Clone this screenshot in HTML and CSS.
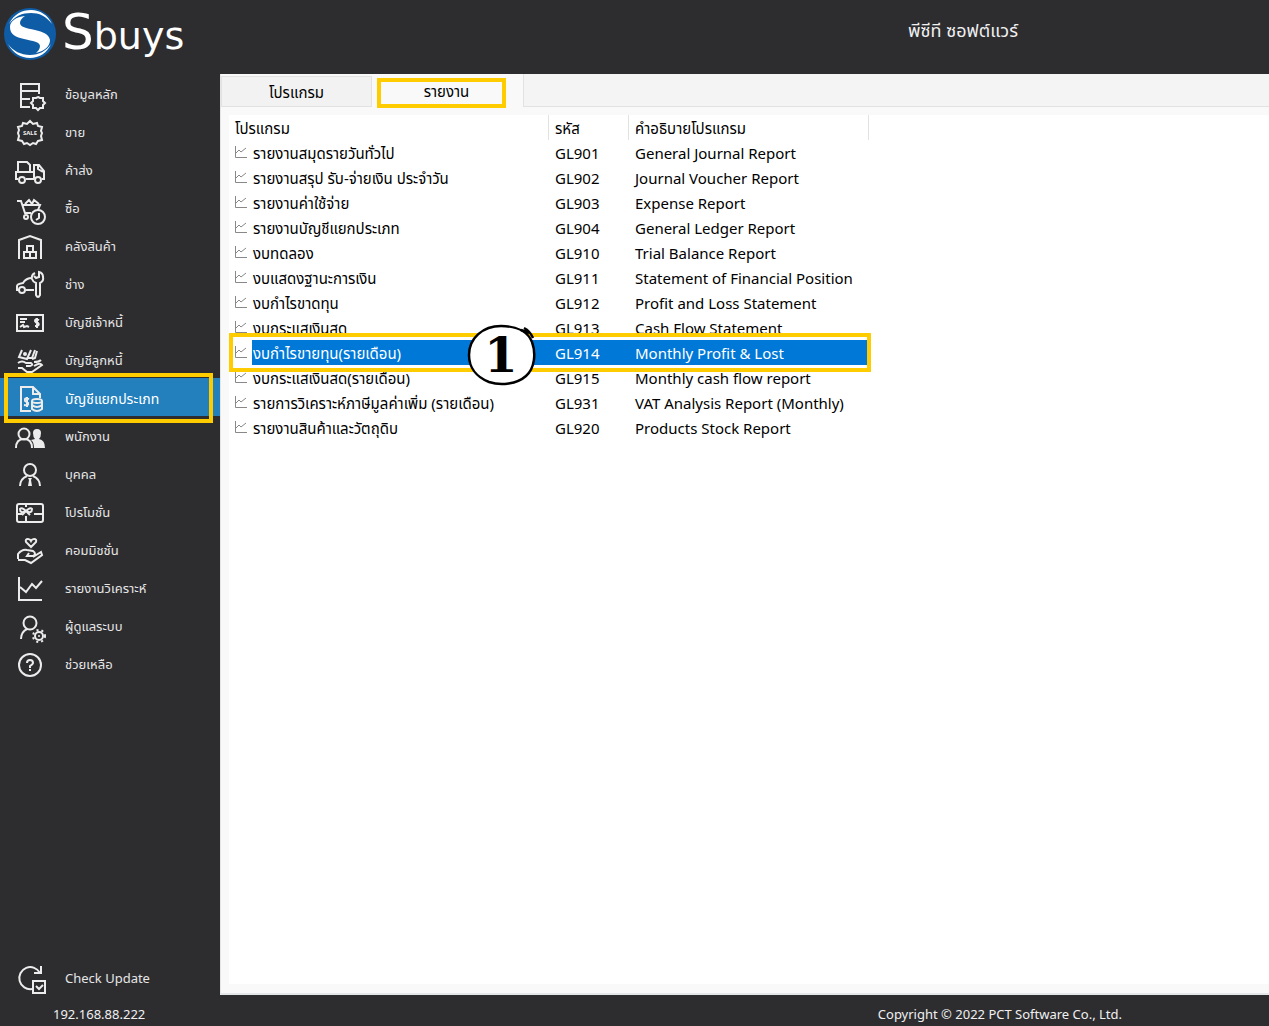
FILE: index.html
```
<!DOCTYPE html>
<html lang="th">
<head>
  <meta charset="utf-8">
  <title>Sbuys</title>
  <link rel="stylesheet" href="styles.css">
</head>
<body>
  <header class="topbar">
    <div class="logo">
      <svg class="logo-mark" viewBox="0 0 52 52">
        <circle cx="26" cy="26" r="26" fill="#0f5ca6"/>
        <path d="M5 16C10 6 18 2 27 2C36 2 44 7 48 16C42 8 35 5 27 5C18 5 11 8 5 16Z" fill="#fff"/>
        <path d="M4 36C9 45 17 50 26 50C35 50 43 45 47 36C42 43 35 47 26 47C17 47 9 43 4 36Z" fill="#fff"/>
        <path d="M21 8C12 9 6 13 6 19C6 27 12 29 20 31C29 33 36 34 36 38C36 41 34 43 32 45C41 43 46 38 46 32C45 26 39 24 31 22C22 20 16 19 16 15C16 12 18 10 21 8Z" fill="#fff"/>
      </svg>
      <span class="logo-text"><span class="logo-big">S</span>buys</span>
    </div>
    <div class="company">พีซีที ซอฟต์แวร์</div>
  </header>

  <div class="middle">
    <aside class="sidebar">
      <nav class="menu">
        <a class="item" href="#">
          <svg class="icon" viewBox="0 0 32 32"><path d="M25 15V5H7V28H16M7 12H25M7 20H16"/><path d="M24 18L26 19L29 19L29 22L31 24L29 26L29 29L26 29L24 31L22 29L19 29L19 26L17 24L19 22L19 19L22 19Z"/></svg>
          ข้อมูลหลัก</a>
        <a class="item" href="#">
          <svg class="icon" viewBox="0 0 32 32"><path d="M16 4L19 7L23 6L24 9L28 10L27 14L28 16L27 19L28 23L24 24L22 27L19 26L16 28L13 26L10 27L8 24L4 23L5 19L4 16L5 13L4 10L8 9L9 6L13 7Z"/><text class="sale" x="16" y="18">SALE</text></svg>
          ขาย</a>
        <a class="item" href="#">
          <svg class="icon" viewBox="0 0 32 32"><path d="M4 17V7H13L16 10V17M20 24V10H25L30 16V24H28M20 17H2V24H4M12 24H20M24 10V14L29 17"/><circle cx="8" cy="25" r="3"/><circle cx="24" cy="25" r="3"/></svg>
          ค้าส่ง</a>
        <a class="item" href="#">
          <svg class="icon" viewBox="0 0 32 32"><path d="M3 8H7L11 20H17M8 12H26L24 17M11 11L15 7L18 11L20 7L25 11"/><circle cx="12" cy="24" r="2"/><circle cx="24" cy="24" r="7"/><path d="M25 20V25L22 27"/></svg>
          ซื้อ</a>
        <a class="item" href="#">
          <svg class="icon" viewBox="0 0 32 32"><path d="M5 28V9L16 5L27 9V28M13 21V15H19V21M10 21H22V27H10ZM16 21V27"/></svg>
          คลังสินค้า</a>
        <a class="item" href="#">
          <svg class="icon" viewBox="0 0 32 32"><path d="M5 21H3V17Q3 15 9 14Q12 9 18 9M12 21H20"/><circle cx="8" cy="21" r="3"/><path d="M21 4Q17 6 18 10Q19 13 22 14V26Q24 30 26 26V14Q30 12 29 8Q29 4 25 3V8L22 9L20 7"/></svg>
          ช่าง</a>
        <a class="item" href="#">
          <svg class="icon" viewBox="0 0 32 32"><path d="M3 8H29V24H3ZM6 12H13M6 15H11M6 20L9 18L10 20L13 19L15 20M25 13Q21 11 21 14Q22 16 24 16Q26 18 23 19H21M23 11V21"/></svg>
          บัญชีเจ้าหนี้</a>
        <a class="item" href="#">
          <svg class="icon" viewBox="0 0 32 32"><path d="M8 5L5 12L13 14L17 5M21 5L18 13H13M23 6L21 13L18 14M4 18Q8 15 12 18H17Q20 20 16 21H12M4 23H8L13 27H18L28 20Q26 17 20 21M20 17Q25 17 27 15"/><circle cx="11" cy="9" r="1"/></svg>
          บัญชีลูกหนี้</a>
        <a class="item selected" href="#">
          <svg class="icon" viewBox="0 0 32 32"><path d="M17 28H7V4H19L26 11V15M19 4V11H26M15 16Q10 14 11 18L14 20Q15 23 10 22M13 14V24"/><ellipse cx="23" cy="18" rx="5" ry="2"/><path d="M18 18V26Q23 30 28 26V18M18 22Q23 26 28 22"/></svg>
          บัญชีแยกประเภท</a>
        <a class="item" href="#">
          <svg class="icon" viewBox="0 0 32 32"><circle cx="10" cy="13" r="5.500"/><path d="M2 27Q2 18 10 18Q18 18 18 27"/><path class="solid" d="M23 8A4 4 0 0 1 27 12Q27 16 25 18Q31 19 31 27H20Q20 21 17 19L21 18Q19 16 19 12A4 4 0 0 1 23 8Z"/></svg>
          พนักงาน</a>
        <a class="item" href="#">
          <svg class="icon" viewBox="0 0 32 32"><circle cx="16" cy="11" r="6"/><path d="M6 27Q6 20 13 17M26 27Q26 20 19 17"/><path class="solid" d="M14 19H18L17 21L18 27H14L15 21Z"/></svg>
          บุคคล</a>
        <a class="item" href="#">
          <svg class="icon" viewBox="0 0 32 32"><rect x="3" y="7" width="26" height="18" rx="2"/><path d="M12 7V10M12 19V25M3 17H8M20 17H29"/><path d="M12 14Q8 10 6 12Q6 17 12 14Q16 10 18 12Q18 17 12 14L8 18M12 14L16 18"/></svg>
          โปรโมชั่น</a>
        <a class="item" href="#">
          <svg class="icon" viewBox="0 0 32 32"><path d="M17 12L12 7Q11 4 14 4Q16 4 17 6Q18 4 20 4Q23 4 22 7ZM4 24V19Q8 14 13 15L19 16Q23 19 19 21L13 21L15 18M19 22L27 17L28 20L17 28L11 25L4 25"/></svg>
          คอมมิชชั่น</a>
        <a class="item" href="#">
          <svg class="icon" viewBox="0 0 32 32"><path d="M5 4V27H28M6 14L12 19L18 11L22 15L28 8"/></svg>
          รายงานวิเคราะห์</a>
        <a class="item" href="#">
          <svg class="icon" viewBox="0 0 32 32"><circle cx="16" cy="12" r="6.500"/><path d="M7 28Q7 21 13 18"/><circle cx="25" cy="25" r="4"/><circle class="teeth" cx="25" cy="25" r="6"/><circle class="solid" cx="25" cy="25" r="1"/></svg>
          ผู้ดูแลระบบ</a>
        <a class="item" href="#">
          <svg class="icon" viewBox="0 0 32 32"><circle cx="16" cy="16" r="11"/><path d="M13 14Q13 11 16 11Q19 11 19 14Q19 15 16 17V19M16 20V22"/></svg>
          ช่วยเหลือ</a>
      </nav>
      <a class="item" href="#">
        <svg class="icon" viewBox="0 0 32 32"><path d="M18 27A11 11 0 1 1 26 11M27 4V11H20"/><path d="M19 19H31V31H19ZM22 24L25 27L29 23"/></svg>
        Check Update</a>
      <div class="mark mark-menu"></div>
    </aside>

    <main class="panel">
      <div class="tabs">
        <button class="tab">โปรแกรม</button>
        <button class="tab active">รายงาน<span class="mark mark-tab"></span></button>
        <div class="tab-rest"></div>
      </div>
      <div class="list">
        <svg class="defs"><symbol id="chart" viewBox="0 0 12 12"><path d="M.5 0V11.500H12M1 7L4 4L6 6L11 2" fill="none" stroke="#888"/></symbol></svg>
        <div class="list-inner">
          <table>
            <colgroup><col class="c-icon"><col class="c-name"><col class="c-code"><col class="c-desc"></colgroup>
            <thead>
              <tr><th colspan="2">โปรแกรม</th><th>รหัส</th><th>คำอธิบายโปรแกรม</th></tr>
            </thead>
            <tbody>
              <tr><td><svg><use href="#chart"/></svg></td><td>รายงานสมุดรายวันทั่วไป</td><td>GL901</td><td>General Journal Report</td></tr>
              <tr><td><svg><use href="#chart"/></svg></td><td>รายงานสรุป รับ-จ่ายเงิน ประจำวัน</td><td>GL902</td><td>Journal Voucher Report</td></tr>
              <tr><td><svg><use href="#chart"/></svg></td><td>รายงานค่าใช้จ่าย</td><td>GL903</td><td>Expense Report</td></tr>
              <tr><td><svg><use href="#chart"/></svg></td><td>รายงานบัญชีแยกประเภท</td><td>GL904</td><td>General Ledger Report</td></tr>
              <tr><td><svg><use href="#chart"/></svg></td><td>งบทดลอง</td><td>GL910</td><td>Trial Balance Report</td></tr>
              <tr><td><svg><use href="#chart"/></svg></td><td>งบแสดงฐานะการเงิน</td><td>GL911</td><td>Statement of Financial Position</td></tr>
              <tr><td><svg><use href="#chart"/></svg></td><td>งบกำไรขาดทุน</td><td>GL912</td><td>Profit and Loss Statement</td></tr>
              <tr><td><svg><use href="#chart"/></svg></td><td>งบกระแสเงินสด</td><td>GL913</td><td>Cash Flow Statement</td></tr>
              <tr class="current"><td><svg><use href="#chart"/></svg></td><td>งบกำไรขายทุน(รายเดือน)</td><td>GL914</td><td>Monthly Profit &amp; Lost</td></tr>
              <tr><td><svg><use href="#chart"/></svg></td><td>งบกระแสเงินสด(รายเดือน)</td><td>GL915</td><td>Monthly cash flow report</td></tr>
              <tr><td><svg><use href="#chart"/></svg></td><td>รายการวิเคราะห์ภาษีมูลค่าเพิ่ม (รายเดือน)</td><td>GL931</td><td>VAT Analysis Report (Monthly)</td></tr>
              <tr><td><svg><use href="#chart"/></svg></td><td>รายงานสินค้าและวัตถุดิบ</td><td>GL920</td><td>Products Stock Report</td></tr>
            </tbody>
          </table>
          <div class="mark mark-row"></div>
          <svg class="step" viewBox="0 0 70 62">
            <path d="M34 2C50 2 61 8 65 18C69 29 68 44 59 52C50 60 34 62 22 58C9 53 2 43 2 31C2 14 16 2 34 2Z" fill="#fff" stroke="#000" stroke-width="2.500"/>
            <path d="M57 4Q63 7 66 14M54 6L62 9" fill="none" stroke="#000" stroke-width="2.500"/>
            <text x="34" y="48">1</text>
          </svg>
        </div>
      </div>
    </main>
  </div>

  <footer class="bottombar">
    <span>192.168.88.222</span>
    <span>Copyright © 2022 PCT Software Co., Ltd.</span>
  </footer>
</body>
</html>
```
FILE: styles.css
```
*{
  box-sizing: border-box;
}
body{
  margin: 0;
  min-height: 100vh;
  display: flex;
  flex-direction: column;
  background-color: #2d2d30;
  color: #f0f0f0;
  font-family: "Noto Sans", "Noto Sans Thai", sans-serif;
  font-size: 13px;
}

/* header */
.topbar{
  display: flex;
  justify-content: space-between;
  height: 74px;
  padding: 8px 251px 0 4px;
}
.logo{
  display: flex;
  gap: 6px;
}
.logo-mark{
  width: 52px;
  height: 52px;
}
.logo-text{
  font-family: "DejaVu Sans", sans-serif;
  font-size: 38px;
  line-height: 48px;
  color: #fff;
}
.logo-big{
  font-size: 50px;
}
.company{
  font-size: 18px;
  line-height: 44px;
}

.middle{
  flex: 1;
  display: flex;
}

/* left menu */
.sidebar{
  position: relative;
  width: 220px;
  display: flex;
  flex-direction: column;
  justify-content: space-between;
}
.item{
  display: flex;
  align-items: center;
  gap: 19px;
  height: 38px;
  padding: 4px 0 0 14px;
  color: #e6e6e6;
  text-decoration: none;
}
.item:hover{
  background-color: #3e3e42;
}
.selected, .selected:hover{
  background-color: #2380bd;
  color: #fff;
  font-size: 14px;
}
.icon{
  width: 32px;
  height: 32px;
  overflow: visible;
  fill: none;
  stroke: #ececec;
  stroke-width: 2;
}
.icon .solid{
  fill: #ececec;
  stroke: none;
}
.icon .teeth{
  stroke-dasharray: 2 3;
}
.sale{
  fill: #ececec;
  stroke: none;
  font-size: 6px;
  font-weight: bold;
  text-anchor: middle;
}

/* right side */
.panel{
  flex: 1;
  display: flex;
  flex-direction: column;
  background-color: #f9f9f9;
  border-left: 1px solid #e5e5e5;
  border-bottom: 2px solid #e5e8e8;
  color: #000;
}
.tabs{
  display: flex;
  align-items: flex-end;
  height: 33px;
}
.tab{
  position: relative;
  width: 151px;
  height: 31px;
  padding: 3px 0 0;
  border: 1px solid #e2e2e2;
  background-color: #f2f2f2;
  color: #000;
  font-family: inherit;
  font-size: 15px;
}
.active{
  height: 33px;
  padding-right: 2px;
  border: none;
  background-color: #f9f9f9;
}
.tab-rest{
  flex: 1;
  height: 33px;
  background-color: #f4f4f4;
  border-left: 1px solid #e2e2e2;
  border-bottom: 1px solid #e2e2e2;
}
.list{
  flex: 1;
  display: flex;
  padding: 8px 0 9px 8px;
}
.list-inner{
  position: relative;
  flex: 1;
  background-color: #fff;
}
.defs{
  display: none;
}
table{
  table-layout: fixed;
  width: 640px;
  border-collapse: separate;
  border-spacing: 0;
  font-size: 15px;
  line-height: 23px;
}
.c-icon{
  width: 23px;
}
.c-name{
  width: 297px;
}
.c-code{
  width: 80px;
}
.c-desc{
  width: 240px;
}
th, td{
  height: 25px;
  padding: 2px 0 0 6px;
  text-align: left;
  font-weight: normal;
  white-space: nowrap;
}
th{
  border-right: 1px solid #e2e2e2;
}
td:nth-child(2){
  padding-left: 1px;
}
td svg{
  display: block;
  width: 12px;
  height: 12px;
  margin-bottom: 4px;
}
.current td:not(:first-child){
  background-color: #0078d7;
  color: #fff;
}

/* yellow guide boxes */
.mark{
  position: absolute;
  border: 4px solid #fc0;
  pointer-events: none;
}
.mark-menu{
  top: 299px;
  left: 4px;
  width: 209px;
  height: 50px;
}
.mark-tab{
  top: 4px;
  left: 5px;
  width: 129px;
  height: 30px;
}
.mark-row{
  top: 218px;
  left: 0;
  width: 642px;
  height: 39px;
}
.step{
  position: absolute;
  top: 209px;
  left: 238px;
  width: 70px;
  height: 62px;
}
.step text{
  font-family: "DejaVu Serif", serif;
  font-size: 48px;
  font-weight: bold;
  text-anchor: middle;
}

.bottombar{
  display: flex;
  justify-content: space-between;
  height: 31px;
  padding: 0 147px 0 53px;
  line-height: 38px;
}
```
